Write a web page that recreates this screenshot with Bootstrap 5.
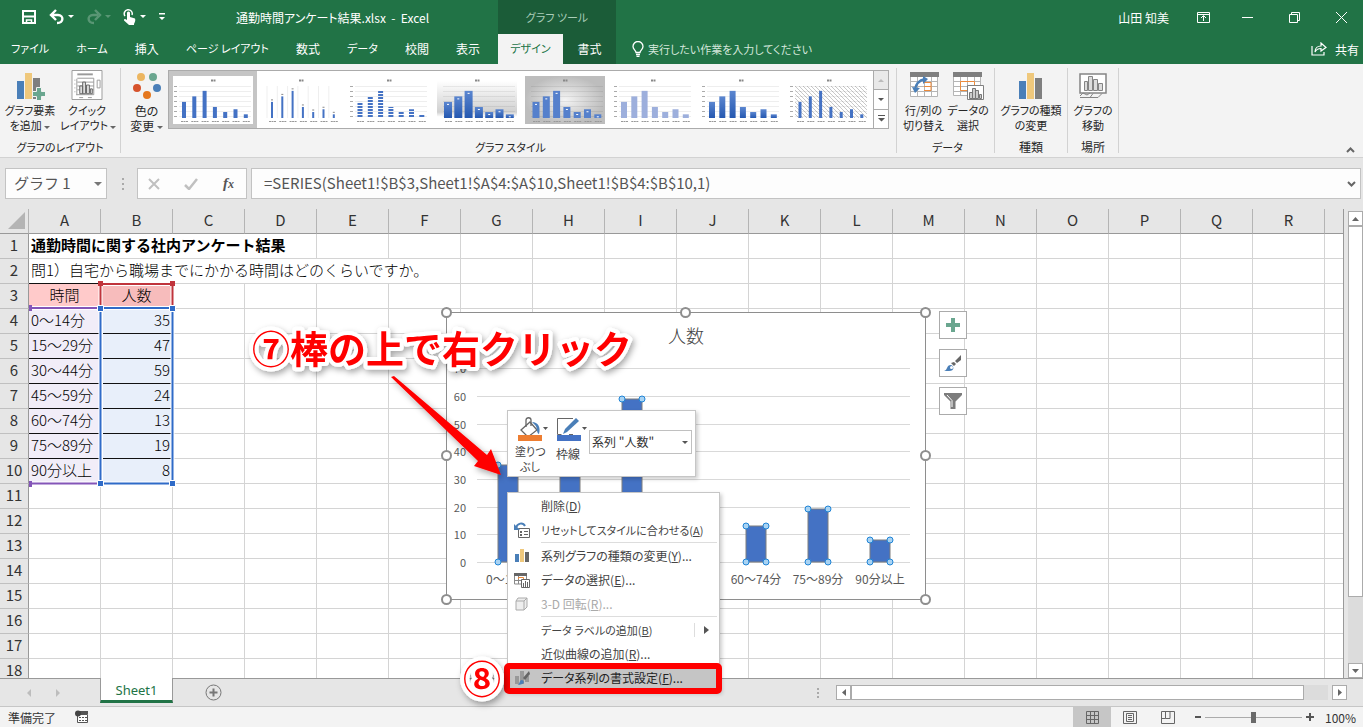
<!DOCTYPE html>
<html lang="ja">
<head>
<meta charset="utf-8">
<meta name="viewport" content="width=device-width, initial-scale=1">
<title>通勤時間アンケート結果.xlsx - Excel</title>
<link href="https://cdn.jsdelivr.net/npm/bootstrap@5.3.0/dist/css/bootstrap.min.css" rel="stylesheet">
<style>
body{font:12px/15px "Noto Sans CJK JP",sans-serif;font-feature-settings:"palt";color:#262626;background:#e6e6e6;height:100vh}
button{background:none;border:0;padding:0;color:inherit;font:inherit;font-feature-settings:inherit}
svg{display:block;flex:none}
.kana{font-size:11px}
.app-head{display:grid;grid-template-columns:498px 118px 1fr;grid-template-rows:34px 30px;background:#217346;color:#fff}
.qat{gap:12px;padding-left:21px}
.ctx{background:#1b5c38}
.ctx-cap{color:#a9cdb8}
.rtabs{padding:0 18px 2px 11px}
.rtabs a,.ctx a{color:#fff;text-decoration:none}
.ctx a{padding-bottom:2px}
.ctx a.active{background:#f3f3f3;color:#217346;width:65px}
.tell{color:#d3e6da}
.ribbon{background:#f3f3f3;border-bottom:1px solid #d2d2d2;height:94px}
.rgroup{border-right:1px solid #d2d2d2;margin:4px 0;position:relative}
.rgroup>.cap{height:16px;line-height:20px;text-align:center}
.rbtn{text-align:center;padding-top:2px;white-space:nowrap}
.rbtn svg.ic{margin:0 auto 3px}
.tri{display:inline-block;border:3px solid transparent;border-top-color:#666;border-bottom:0;vertical-align:middle}
.gallery{border:1px solid #ababab;background:#fff;height:59px;margin-top:2px}
.gallery .gitem{width:88px;height:57px;padding:4px}
.gallery .gitem.active{background:#c5c5c5}
.gscroll{width:15px;border-left:1px solid #ababab}
.gscroll button{flex:1;border-bottom:1px solid #ababab;display:flex;align-items:center;justify-content:center}
.gscroll button:last-child{border-bottom:0}
.fbar{padding:10px 2px 10px 5px;color:#555}
.fbox{background:#fdfdfd;border:1px solid #c3c3c3;height:31px}
.fbox input{border:0;background:none;outline:0;width:100%;padding:0 0 2px;color:#555;font:15px/20px "Noto Sans CJK JP",sans-serif}
.namebox{width:102px;margin-right:15px}
.fxbox{width:110px;margin:0 4px 0 12px;padding:0 10px}
.sheet{overflow:hidden;border-bottom:1px solid #999}
.grid{table-layout:fixed;border-collapse:separate;border-spacing:0;width:1px;background:#fff;font:300 15px/22px "Noto Sans CJK JP",sans-serif;font-feature-settings:normal;color:#000}
.grid b{font-weight:700}
.grid th,.grid td{height:25px;padding:0 2px 2px;border-right:1px solid #d4d4d4;border-bottom:1px solid #d4d4d4;white-space:nowrap;overflow:hidden}
.grid th{background:#e6e6e6;font-weight:400;text-align:center;border-right-color:#b4b4b4;border-bottom-color:#999;padding:0 0 2px;color:#333}
.grid tbody th{border-right-color:#999;border-bottom-color:#c0c0c0}
.grid .cat{background:#f1edf8;border-bottom-color:#111}
.grid .val{background:#e8effa;border-bottom-color:#111;text-align:right}
.gridwrap{border-right:1px solid #999;overflow:hidden}
.vscroll{width:19px;padding:2px 0 0 4px}
.sbtn{width:15px;height:15px;background:#fff;border:1px solid #ababab;display:flex;align-items:center;justify-content:center}
.thumb{background:#fff;border:1px solid #ababab}
.track{background:#dcdcdc}
.tabbar{height:27px}
.sheettab{width:73px;height:25px;background:#fff;border:solid #999;border-width:0 1px;border-bottom:3px solid #217346;color:#217346;text-decoration:none;font:13px/24px "Noto Sans",sans-serif;text-align:center;margin:-1px 0 0 36px;position:relative}
.hbar{width:511px}
.status{height:21px;background:#f3f3f3;border-top:1px solid #c6c6c6;color:#333}
.viewbtn{width:38px;height:20px;display:flex;align-items:center;justify-content:center}
.viewbtn.active{background:#c6c6c6}
.zoom{appearance:none;width:97px;height:20px;background:linear-gradient(#ababab,#ababab) center/100% 1px no-repeat}
.zoom::-webkit-slider-thumb{appearance:none;width:5px;height:11px;background:#6a6a6a}
.overlay{position:absolute;inset:0;overflow:visible;pointer-events:none;font-feature-settings:normal}
.chart-tools{position:absolute;left:939px;top:102px}
.chart-tools button{width:28px;height:28px;border:1px solid #ababab;background:#fff;display:flex;align-items:center;justify-content:center}
.popup{position:absolute;left:507px;background:#fff;border:1px solid #c6c6c6;box-shadow:2px 2px 4px #0003;color:#444;white-space:nowrap}
.minibar{top:201px;width:189px;height:67px;padding:6px 3px 0 7px}
.minibar .form-select{width:103px;height:24px;margin-top:13px;padding:0 14px 0 2px;border:1px solid #c0c0c0;border-radius:0;font:12px/20px "Noto Sans CJK JP",sans-serif;color:#333;background:#fff url("data:image/svg+xml,%3Csvg xmlns='http://www.w3.org/2000/svg' width='6' height='3'%3E%3Cpath d='M0 0h6L3 3z' fill='%23555'/%3E%3C/svg%3E") right 3px center/6px 3px no-repeat}
.ctxmenu{display:block;top:283px;width:213px;padding:1px;border-radius:0;line-height:24px}
.ctxmenu button{display:flex;align-items:center;width:100%;height:24px;text-align:left;padding-left:5px}
.ctxmenu .mi{width:16px;margin-right:11px;flex:none}
.ctxmenu hr{margin:0 1px 1px 32px;border-top:1px solid #ddd;opacity:1}
.ctxmenu .off{color:#aaa}
.ctxmenu .hot{background:#c5c5c5;color:#222}
</style>
</head>
<body class="d-flex flex-column overflow-hidden">
<header class="app-head flex-shrink-0">
  <div class="d-flex align-items-center">
    <div class="qat d-flex align-items-center">
      <button aria-label="上書き保存"><svg width="16" height="16" fill="none" stroke="#fff" stroke-width="2"><path d="M2 2h12v12H2zM3 7.500h10"/><path d="M5.500 14v-3h5v3" stroke-width="1.500"/></svg></button>
      <button class="d-flex align-items-center" aria-label="元に戻す"><svg width="25" height="16"><path d="M3 6h6c6 0 6 8-1 8M7 1L2 6l5 5" fill="none" stroke="#fff" stroke-width="2.400"/><path d="M19 6h6l-3 3z" fill="#fff"/></svg></button>
      <button class="d-flex align-items-center" aria-label="やり直し"><svg width="25" height="16" opacity=".25"><path d="M12 6H7c-6 0-6 8 1 8M9 1l5 5-5 5" fill="none" stroke="#fff" stroke-width="2.400"/><path d="M19 6h6l-3 3z" fill="#fff"/></svg></button>
      <button aria-label="タッチ/マウス モード"><svg width="24" height="18" fill="#fff"><path d="M2 8a4 4 0 1 1 7-1" fill="none" stroke="#fff" stroke-width="1.500"/><path d="M4 4.500q1.500-2 3 0V9l5 1.500c1 3-1 4-1 6.500H6L1 12.500c0-2 1-2 3-.5zM17 7h6l-3 3z"/></svg></button>
      <button aria-label="クイック アクセスのカスタマイズ"><svg width="8" height="8" fill="#fff"><path d="M0 0h6v1.500H0zM0 4h6L3 7z"/></svg></button>
    </div>
    <div class="flex-fill text-center">通勤時間アンケート結果.xlsx&nbsp; -&nbsp; Excel</div>
  </div>
  <div class="ctx ctx-cap kana d-flex align-items-center justify-content-center">グラフ ツール</div>
  <div class="d-flex align-items-center justify-content-end">
    <span>山田 知美</span>
    <button class="ms-4 me-4" aria-label="リボンの表示オプション"><svg class="ms-1 me-2" width="13" height="11" fill="none" stroke="#fff"><path d="M.5.5h12v10H.5zM1 2.500h11M6.500 9V4M4 6l2.500-2.500L9 6"/></svg></button>
    <button class="me-4" aria-label="最小化"><svg class="me-2" width="11" height="11" stroke="#fff"><path d="M0 5.500h11"/></svg></button>
    <button class="ms-1 me-4" aria-label="元のサイズに戻す"><svg class="me-2" width="11" height="11" fill="none" stroke="#fff"><path d="M.5 2.500h8v8h-8zM2.500 2.500v-2h8v8h-2"/></svg></button>
    <button class="ms-1" aria-label="閉じる"><svg class="me-3" width="11" height="11" stroke="#fff"><path d="M0 0l11 11M11 0L0 11"/></svg></button>
  </div>
  <nav class="rtabs d-flex align-items-center justify-content-between" aria-label="リボン">
    <a class="kana" href="#">ファイル</a><a class="kana" href="#">ホーム</a><a href="#">挿入</a><a class="kana" href="#">ページ レイアウト</a><a href="#">数式</a><a class="kana" href="#">データ</a><a href="#">校閲</a><a href="#">表示</a>
  </nav>
  <nav class="ctx d-flex text-center" aria-label="グラフ ツール">
    <a class="active kana d-flex align-items-center justify-content-center" href="#">デザイン</a><a class="flex-fill d-flex align-items-center justify-content-center" href="#">書式</a>
  </nav>
  <div class="d-flex align-items-center justify-content-between ps-3 pe-1">
    <button class="tell kana d-flex align-items-center gap-1"><svg width="12" height="16" fill="none" stroke="#fff" stroke-width="1.300"><path d="M4 11.500c0-2-3-3-3-6a5 5 0 0 1 10 0c0 3-3 4-3 6zM4 13.500h4M4.500 15.500h3"/></svg>実行したい作業を入力してください</button>
    <button class="d-flex align-items-center gap-2"><svg width="16" height="14" fill="none" stroke="#fff" stroke-width="1.200"><path d="M1 4v9h12V10M4 10c0-4 3-6 6-6V1l5 4.500L10 9V6.500C7 6.500 5 8 4 10z"/></svg>共有</button>
  </div>
</header>

<section class="ribbon d-flex flex-shrink-0" aria-label="デザイン">
  <div class="rgroup d-flex flex-column justify-content-between" style="width:121px">
    <div class="d-flex">
      <button class="rbtn kana" style="width:60px"><svg class="ic" width="30" height="30"><path fill="#4a7fb8" d="M2 11h7v18H2z"/><path fill="#efc87c" d="M10 3h7v26h-7z"/><path fill="#7f7f7f" d="M18 8h7v21h-7z"/><path fill="#6aa68f" stroke="#f3f3f3" d="M21.500 18.500h5v4h4v5h-4v4h-5v-4h-4v-5h4z" transform="translate(0 -1)"/></svg>グラフ要素<br>を追加 <i class="tri"></i></button>
      <button class="rbtn kana" style="width:54px"><svg class="ic" width="32" height="30" viewBox="0 0 32 31" fill="none" stroke="#9a9a9a"><path fill="#fff" d="M.5.500h31v30H.5z"/><path d="M6 4.500h16" stroke-width="2"/><path d="M5.500 9v17M5 25.500h18M3 10.500h1M3 14.500h1M3 18.500h1M3 22.500h1M6 8.500h17v17M6 12.500h17M6 16.500h17M6 20.500h17M8 28.500h4M17 28.500h4M26.500 10.500h3v8h-3z"/><path fill="#ddd" stroke="#666" d="M8.500 16.500h3v8h-3zM11.500 12.500h3v12h-3zM15.500 15.500h3v9h-3zM19.500 19.500h2v5h-2z"/></svg>クイック<br>レイアウト <i class="tri"></i></button>
    </div>
    <div class="cap kana">グラフのレイアウト</div>
  </div>
  <div class="rgroup d-flex flex-column justify-content-between ps-1" style="width:776px">
    <div class="d-flex">
      <button class="rbtn" style="width:43px"><svg class="ic" width="30" height="30"><circle cx="9" cy="7" r="4" fill="#ecb661"/><circle cx="21" cy="7" r="4" fill="#6aa68f"/><circle cx="5" cy="18" r="4" fill="#d6532c"/><circle cx="25" cy="18" r="4" fill="#4a7fb8"/><circle cx="15" cy="25" r="4" fill="#e5771d"/></svg>色の<br>変更 <i class="tri"></i></button>
      <div class="gallery d-flex" id="gallery">
        <div class="gscroll d-flex flex-column order-last"><button style="background:#e9e9e9" aria-label="前へ"><svg width="6" height="3"><path d="M0 3h6L3 0z" fill="#bbb"/></svg></button><button aria-label="次へ"><svg width="6" height="3"><path d="M0 0h6L3 3z" fill="#555"/></svg></button><button aria-label="その他"><svg width="7" height="7"><path d="M0 0h7v1H0zM0 3h7L3.500 6.500z" fill="#555"/></svg></button></div>
      </div>
    </div>
    <div class="cap kana">グラフ スタイル</div>
  </div>
  <div class="rgroup d-flex flex-column justify-content-between ps-1" style="width:98px">
    <div class="d-flex">
      <button class="rbtn kana" style="width:45px"><svg class="ic" width="30" height="30"><path fill="#fff" stroke="#b5b5b5" d="M1.500 6.500h27v20h-27zM2 11.500h26M2 16.500h26M2 21.500h26M8.500 7v19M15.500 7v19M22.500 7v19"/><path fill="#7f7f7f" d="M1 2h29v5H1z"/><path d="M15 12.500h7v8h-7M15 16.500h7" fill="none" stroke="#ec8b3c"/><path d="M6 20q1-9 10-11" fill="none" stroke="#4a7fb8" stroke-width="2.500"/><path fill="#4a7fb8" d="M3 17l3 6 5-5zM14 6l5 3-5 5z"/></svg>行/列の<br>切り替え</button>
      <button class="rbtn kana" style="width:44px"><svg class="ic" width="32" height="30"><path fill="#fff" stroke="#b5b5b5" d="M1.500 6.500h27v19h-27zM2 11.500h26M2 16.500h26M2 21.500h26M8.500 7v19M15.500 7v19M22.500 7v19"/><path fill="#7f7f7f" d="M1 2h29v5H1z"/><path d="M8.500 11.500h14v9h-14z" fill="none" stroke="#ec8b3c"/><path fill="#fff" stroke="#7f7f7f" d="M15.500 15.500h16v14h-16z"/><path fill="#ccc" stroke="#777" d="M17.500 22.500h3v6h-3zM20.500 18.500h3v10h-3zM23.500 20.500h3v8h-3zM27.500 24.500h2v4h-2z"/></svg>データの<br>選択</button>
    </div>
    <div class="cap kana">データ</div>
  </div>
  <div class="rgroup d-flex flex-column justify-content-between" style="width:73px">
    <button class="rbtn kana"><svg class="ic" width="24" height="30"><path fill="#4a7fb8" d="M0 11h7v18H0z"/><path fill="#efc87c" d="M8 3h7v26H8z"/><path fill="#7f7f7f" d="M16 8h7v21h-7z"/></svg>グラフの種類<br>の変更</button>
    <div class="cap">種類</div>
  </div>
  <div class="rgroup d-flex flex-column justify-content-between" style="width:51px">
    <button class="rbtn kana"><svg class="ic" width="28" height="30" fill="none" stroke="#858585" stroke-width="1.500"><path fill="#fff" d="M1 4h26v19H1z"/><path stroke-width="1" d="M1 26l3-3 4 2 3-2M1 27.500h10l3-4M11 27.500h8l4-4"/><path stroke-width="1" fill="#ddd" d="M5.500 11.500h3v9h-3zM9.500 6.500h4v14h-4zM14.500 9.500h4v11h-4zM19.500 13.500h4v7h-4z"/></svg>グラフの<br>移動</button>
    <div class="cap">場所</div>
  </div>
  <button class="ms-auto align-self-end me-2 mb-1" aria-label="リボンを折りたたむ"><svg width="9" height="6"><path d="M1 5l3.500-3.500L8 5" fill="none" stroke="#666" stroke-width="2"/></svg></button>
</section>

<section class="fbar d-flex align-items-center flex-shrink-0" aria-label="数式バー">
  <label class="fbox namebox d-flex align-items-center ps-2 pe-1"><input aria-label="名前ボックス" value="グラフ 1"><svg width="8" height="4"><path d="M0 0h8L4 4z" fill="#777"/></svg></label>
  <svg width="3" height="14" fill="#aaa"><path d="M0 1h2v2H0zM0 6h2v2H0zM0 11h2v2H0z"/></svg>
  <div class="fbox fxbox d-flex align-items-center justify-content-between">
    <button aria-label="キャンセル"><svg width="12" height="12"><path d="M1 1l10 10M11 1L1 11" stroke="#c0c0c0" stroke-width="2"/></svg></button>
    <button aria-label="入力"><svg width="14" height="12"><path d="M1 7l4 4L13 1" fill="none" stroke="#c0c0c0" stroke-width="2.500"/></svg></button>
    <button aria-label="関数の挿入"><svg width="14" height="16" font-family="Liberation Serif, serif" font-style="italic" font-weight="700" fill="#555"><text x="1" y="12" font-size="15">f<tspan font-size="12">x</tspan></text></svg></button>
  </div>
  <div class="fbox flex-fill d-flex align-items-center ps-2 pe-1"><input class="ms-1" aria-label="数式" value="=SERIES(Sheet1!$B$3,Sheet1!$A$4:$A$10,Sheet1!$B$4:$B$10,1)"><svg width="9" height="6"><path d="M1 1l3.500 3.500L8 1" fill="none" stroke="#666" stroke-width="2"/></svg></div>
</section>

<main class="flex-fill d-flex flex-column position-relative" style="min-height:0">
  <div class="sheet flex-fill d-flex" style="min-height:0">
    <div class="gridwrap flex-fill" id="view">
      <table class="grid">
        <colgroup id="cols"><col style="width:29px"></colgroup>
        <thead><tr id="heads"><th><svg width="28" height="22"><path d="M25 3v17H8z" fill="#b4b4b4"/></svg></th></tr></thead>
        <tbody id="rows">
          <tr><th>1</th><td colspan="4"><b>通勤時間に関する社内アンケート結果</b></td></tr>
          <tr><th>2</th><td colspan="6">問1）自宅から職場までにかかる時間はどのくらいですか。</td></tr>
          <tr><th>3</th><td class="text-center" style="background:#ffcaca">時間</td><td class="text-center" style="background:#f7bcbc">人数</td></tr>
          <tr><th>4</th><td class="cat">0～14分</td><td class="val">35</td></tr>
          <tr><th>5</th><td class="cat">15～29分</td><td class="val">47</td></tr>
          <tr><th>6</th><td class="cat">30～44分</td><td class="val">59</td></tr>
          <tr><th>7</th><td class="cat">45～59分</td><td class="val">24</td></tr>
          <tr><th>8</th><td class="cat">60～74分</td><td class="val">13</td></tr>
          <tr><th>9</th><td class="cat">75～89分</td><td class="val">19</td></tr>
          <tr><th>10</th><td class="cat">90分以上</td><td class="val">8</td></tr>
        </tbody>
      </table>
    </div>
    <div class="vscroll d-flex flex-column">
      <button class="sbtn" aria-label="上へ"><svg width="7" height="4"><path d="M0 4h7L3.500 0z" fill="#666"/></svg></button>
      <div class="track flex-fill"><div class="thumb" style="height:85%"></div></div>
      <button class="sbtn" aria-label="下へ"><svg width="7" height="4"><path d="M0 0h7L3.500 4z" fill="#666"/></svg></button>
    </div>
  </div>
  <div class="tabbar d-flex align-items-center flex-shrink-0">
    <svg class="ms-4" width="40" height="8" fill="#bdbdbd"><path d="M7 0v8L3 4zM32 0v8l4-4z"/></svg>
    <a class="sheettab align-self-start" href="#">Sheet1</a>
    <button class="ms-4 ps-2" aria-label="新しいシート"><svg width="17" height="17" fill="none" stroke="#777"><circle cx="8.500" cy="8.500" r="7.500"/><path d="M4.500 8.500h8M8.500 4.500v8" stroke-width="2"/></svg></button>
    <svg class="ms-auto me-3" width="3" height="12" fill="#aaa"><path d="M0 1h2v2H0zM0 5h2v2H0zM0 9h2v2H0z"/></svg>
    <div class="hbar d-flex me-3">
      <button class="sbtn" aria-label="左へ"><svg width="4" height="7"><path d="M4 0v7L0 3.500z" fill="#666"/></svg></button>
      <div class="track flex-fill me-1"><div class="thumb h-100" style="width:95%"></div></div>
      <button class="sbtn" aria-label="右へ"><svg width="4" height="7"><path d="M0 0v7l4-3.500z" fill="#666"/></svg></button>
    </div>
  </div>

  <svg class="overlay" width="100%" height="100%" font-family="Noto Sans CJK JP, sans-serif" aria-label="人数グラフ">
    <g transform="translate(0 -209)">
      <path d="M29 283.500h71" stroke="#111"/>
      <g fill="none" stroke="#fff" stroke-width="4"><path d="M100.500 284h72v24h-72z"/><path d="M29 308h72v175.500H29"/><path d="M100.500 308h72v175.500h-72z"/></g>
      <path d="M100.500 284h72v24h-72z" fill="none" stroke="#c0343c" stroke-width="2"/>
      <path d="M29 308h71M29 483.500h71" stroke="#8455b8" stroke-width="2"/>
      <path d="M100.500 308h72v175.500h-72z" fill="none" stroke="#2f6bc8" stroke-width="2"/>
      <path fill="#c0343c" d="M98 281h5v5h-5zM170 281h5v5h-5z"/>
      <path fill="#8455b8" d="M29 305h3v6h-3zM29 481h3v6h-3z"/>
      <path fill="#2f6bc8" stroke="#fff" d="M97.500 305.500h6v6h-6zM169.500 305.500h6v6h-6zM97.500 480.500h6v6h-6zM169.500 480.500h6v6h-6z"/>
      <path d="M446.500 312.500h479v287h-479z" fill="#fff" stroke="#8e8e8e"/>
      <text x="686" y="343" font-size="18" font-weight="300" text-anchor="middle" fill="#444">人数</text>
      <g id="plot"></g>
      <g id="grips" fill="#fff" stroke="#8e8e8e" stroke-width="2"></g>
    </g>
  </svg>

  <div class="chart-tools d-flex flex-column" style="gap:10px">
    <button aria-label="グラフ要素"><svg width="14" height="14"><path d="M7 0v14M0 7h14" stroke="#6aa68f" stroke-width="4"/></svg></button>
    <button aria-label="グラフ スタイル"><svg width="18" height="18"><path d="M17 1v5l-4 3-2-2zM10 8l2 2-2 2-3-3z" fill="#666"/><path d="M0 17c4-1 2-6 7-6 3 1 4 6-2 6z" fill="#4a7fb8"/><circle cx="7.500" cy="13.500" r="1.500" fill="#fff"/></svg></button>
    <button aria-label="グラフ フィルター"><svg width="18" height="17"><path d="M0 0h18v2l-6.500 6.500V16h-5V8.500L0 2z" fill="#7c7c7c"/><path d="M3 2l5 5.500V14" fill="none" stroke="#fff"/></svg></button>
  </div>

  <div class="popup minibar d-flex">
    <button class="text-center align-self-start me-1" style="width:34px"><svg width="34" height="25"><path d="M6 13l9-8 7 8-9 7z" fill="#fff" stroke="#666" stroke-width="1.300"/><path d="M11 10V3c0-3 5-3 5 0v6" fill="none" stroke="#666" stroke-width="1.300"/><path d="M17 5c6 0 9 5 7 12-3-1-1-6-4-9z" fill="#4a7fb8"/><path d="M3 18h24v6H3z" fill="#ed7d31"/><path d="M28 10h5l-2.500 3z" fill="#555"/></svg><span class="kana d-block pt-1 pe-1 lh-1">塗りつ</span><span class="kana d-block pt-1 pe-1 lh-1">ぶし</span></button>
    <button class="text-center align-self-start" style="width:34px"><svg width="34" height="25"><path d="M20 1.500H4.500v16h4M16 17.500h4" fill="none" stroke="#666"/><path d="M10 17l2-5L23 1l3 3-12 11z" fill="#4a7fb8"/><path d="M4 18h24v6H4z" fill="#4472c4"/><path d="M29 10h5l-2.500 3z" fill="#555"/></svg><span class="d-block pe-1 mt-1">枠線</span></button>
    <select class="form-select ms-auto" aria-label="グラフ要素の選択"><option>系列 "人数"</option></select>
  </div>

  <div class="popup ctxmenu" role="menu">
    <button role="menuitem"><span class="mi"></span><span>削除(<u>D</u>)</span></button>
    <button role="menuitem"><span class="mi"><svg width="16" height="16"><path d="M4.500 6.500h11v9h-11z" fill="#fff" stroke="#666"/><path d="M6 9h2v2H6zM6 12h2v2H6zM10 9h4v1h-4zM10 12h4v1h-4z" fill="#666"/><path d="M2 6c1-5 7-6 9-2" fill="none" stroke="#4a7fb8" stroke-width="2"/><path d="M0 2v6h6z" fill="#4a7fb8"/></svg></span><span class="kana">リセットしてスタイルに合わせる(<u>A</u>)</span></button>
    <hr>
    <button role="menuitem"><span class="mi"><svg width="16" height="16"><path fill="#4a7fb8" d="M1 6h4v8H1z"/><path fill="#efc87c" d="M6 1h4v13H6z"/><path fill="#666" d="M11 4h4v10h-4z"/></svg></span><span>系列グラフの種類の変更(<u>Y</u>)...</span></button>
    <button role="menuitem"><span class="mi"><svg width="16" height="16"><path d="M0 1h13v3H0z" fill="#666"/><path d="M.5 4v8h7M.5 8.500h8M4.500 4v8M12.500 4v3" fill="none" stroke="#888"/><path d="M4.500 7V5.500h5V7" stroke="#ec8b3c" fill="none"/><path d="M7.500 7.500h8v8h-8z" fill="#fff" stroke="#666"/><path d="M9 11h1v4H9zM11 9h1v6h-1zM13 10h1v5h-1z" fill="#666"/></svg></span><span>データの選択(<u>E</u>)...</span></button>
    <button role="menuitem" class="off"><span class="mi"><svg width="16" height="16"><path d="M2 5l2-3h9v9l-3 3H2z" fill="#eee" stroke="#aaa"/><path d="M2 5h8v9M10 5l3-3" fill="none" stroke="#aaa"/></svg></span><span>3-D 回転(<u>R</u>)...</span></button>
    <hr>
    <button role="menuitem"><span class="mi"></span><span class="kana flex-fill">データ ラベルの追加(<u>B</u>)</span><svg width="24" height="14"><path d="M.5 0v14" stroke="#ddd"/><path d="M10 3v8l5-4z" fill="#555"/></svg></button>
    <button role="menuitem"><span class="mi"></span><span>近似曲線の追加(<u>R</u>)...</span></button>
    <button role="menuitem" class="hot"><span class="mi"><svg width="16" height="16"><path fill="#999" d="M1 6h4v8H1zM6 1h4v13H6zM11 6h4v6h-4z"/><path d="M15 1l1 3-5 6-2-2z" fill="#666"/><path d="M3 15c3 0 2-5 5-5 3 1 3 5-5 5z" fill="#4a7fb8"/></svg></span><span>データ系列の書式設定(<u>F</u>)...</span></button>
  </div>

  <svg class="overlay" width="100%" height="100%" font-family="Noto Sans CJK JP, sans-serif">
    <defs><filter id="soft" x="-10%" y="-20%" width="120%" height="150%"><feDropShadow dx="2" dy="3" stdDeviation="3" flood-opacity=".35"/></filter></defs>
    <g transform="translate(0 -209)">
      <rect x="507" y="666" width="212" height="25" rx="2" fill="none" stroke="#f00" stroke-width="6"/>
      <g filter="url(#soft)">
        <path d="M391 377l3-1 93 79 4-6 10 26-27-9 4-5z" fill="#f00"/>
        <g font-size="38" font-weight="700" fill="#f00" stroke="#fff" stroke-width="8" stroke-linejoin="round" paint-order="stroke">
          <text x="252" y="363">⑦棒の上で右クリック</text>
          <text x="463" y="693">⑧</text>
        </g>
      </g>
    </g>
  </svg>
</main>

<footer class="status d-flex align-items-center flex-shrink-0">
  <span class="ps-2">準備完了</span>
  <svg class="ms-3" width="18" height="14"><path d="M5.500 4.500h10v8h-10z" fill="#fff" stroke="#555"/><path d="M7 1h9v3H7z" fill="#555"/><circle cx="6" cy="3.500" r="3" fill="#444"/><path d="M7 7.500h8M7 10.500h8" stroke="#555" stroke-dasharray="2 1"/></svg>
  <button class="viewbtn active ms-auto" aria-label="標準"><svg width="13" height="13" fill="none" stroke="#666"><path d="M.5.500h12v12H.5zM4.500 0v13M8.500 0v13M0 4.500h13M0 8.500h13"/></svg></button>
  <button class="viewbtn" aria-label="ページ レイアウト"><svg width="14" height="13" fill="none" stroke="#666"><path d="M.5.500h13v12H.5zM3.500 2.500h7v8h-7zM5 4.500h4M5 6.500h4M5 8.500h4"/></svg></button>
  <button class="viewbtn me-2" aria-label="改ページ プレビュー"><svg width="14" height="13" fill="none" stroke="#666"><path d="M.5.500h13v12H.5zM4.500 0v7.500H9V0M4.500 7.500H0"/></svg></button>
  <button aria-label="縮小"><svg width="6" height="10"><path d="M0 5h6" stroke="#555" stroke-width="2"/></svg></button>
  <input class="zoom mx-1" type="range" min="0" max="100" value="50" aria-label="ズーム">
  <button aria-label="拡大"><svg width="8" height="8"><path d="M0 4h8M4 0v8" stroke="#555" stroke-width="2"/></svg></button>
  <span class="ms-2 me-1 text-center" style="width:37px">100%</span>
</footer>

<script src="https://cdn.jsdelivr.net/npm/bootstrap@5.3.0/dist/js/bootstrap.bundle.min.js"></script>
<script>
const data = [['0～14分',35],['15～29分',47],['30～44分',59],['45～59分',24],['60～74分',13],['75～89分',19],['90分以上',8]];

// As many columns and rows as the window shows; a column too narrow for its letter stays unlabelled
const room = view.clientWidth - 29, colCount = Math.ceil(room / 72), rowCount = Math.ceil((view.clientHeight - 25) / 25);
for (let i = 0; i < colCount; i++) {
  const label = i < 26 && i * 72 + 45 < room ? String.fromCharCode(65 + i) : '';
  cols.insertAdjacentHTML('beforeend', '<col style="width:72px">');
  heads.insertAdjacentHTML('beforeend', `<th>${label}</th>`);
}
for (let r = 11; r <= rowCount; r++) rows.insertAdjacentHTML('beforeend', `<tr><th>${r}</th></tr>`);
for (const tr of rows.rows) {
  let used = 0;
  for (const c of tr.cells) used += c.colSpan;
  tr.insertAdjacentHTML('beforeend', '<td></td>'.repeat(Math.max(0, colCount + 1 - used)));
}

// Chart: value axis, bars with selection dots, category labels
const base = 562, unit = 2.77;
let s = '';
for (let v = 0; v <= 70; v += 10) {
  const y = Math.round(base - v * unit) + .5;
  s += `<path d="M477 ${y}h433" stroke="#d9d9d9"/><text x="466" y="${y + 4}" font-size="11" text-anchor="end" fill="#595959">${v}</text>`;
}
data.forEach(([name, v], i) => {
  const x = 508 + i * 62, top = Math.round(base - v * unit);
  s += `<rect x="${x - 10}" y="${top}" width="20" height="${base - top}" fill="#4472c4" stroke="#7f7f7f"/>`;
  for (const [cx, cy] of [[x - 10, top], [x + 10, top], [x - 10, base], [x + 10, base]])
    s += `<circle cx="${cx}" cy="${cy}" r="3" fill="#a9d3f3" stroke="#1f84d6"/>`;
  s += `<text x="${x}" y="584" font-size="12" text-anchor="middle" fill="#595959">${name}</text>`;
});
plot.innerHTML = s;
grips.innerHTML = [[446,312],[685,312],[925,312],[446,455],[925,455],[446,599],[685,599],[925,599]]
  .map(([x, y]) => `<circle cx="${x + .5}" cy="${y + .5}" r="4.500"/>`).join('');

// Chart style thumbnails
const styles = [
  {w:4, fill:'#4472c4'}, {w:2, fill:'#4472c4', vert:1}, {w:5, fill:'url(#stripe)'},
  {w:8, fill:'url(#deep)', bg:'url(#fade)'}, {w:7, fill:'#5580cc', bg:'url(#metal)'},
  {w:6, fill:'#9dafdc'}, {w:6, fill:'url(#deep)'}, {w:3, fill:'#4472c4', hatch:1}
];
const defs = `<defs><pattern id="stripe" width="4" height="3" patternUnits="userSpaceOnUse"><path d="M0 0h4v2H0z" fill="#4472c4"/></pattern>
<pattern id="hatch" width="4" height="4" patternUnits="userSpaceOnUse"><path d="M0 0l4 4" stroke="#bbb" stroke-width=".8"/></pattern>
<linearGradient id="deep" x2="0" y2="1"><stop stop-color="#5b86d0"/><stop offset="1" stop-color="#2558b0"/></linearGradient>
<linearGradient id="fade" x2="0" y2="1"><stop offset=".1" stop-color="#fff"/><stop offset=".75" stop-color="#d0d0d0"/><stop offset=".85" stop-color="#fff"/></linearGradient>
<radialGradient id="metal"><stop stop-color="#f4f4f4"/><stop offset="1" stop-color="#bdbdbd"/></radialGradient></defs>`;
gallery.insertAdjacentHTML('beforeend', styles.map((st, n) => {
  let g = `<rect width="80" height="48" fill="${st.bg || '#fff'}"/>`;
  if (st.hatch) g += '<rect x="6" y="10" width="72" height="32" fill="url(#hatch)"/>';
  for (let y = 10; y < 43; y += 5) g += st.vert ? '' : `<path d="M6 ${y}.5h72" stroke="#0001"/>`;
  data.forEach(([, v], i) => {
    const x = 11 + i * 10.3, h = v * .46;
    if (st.vert) g += `<path d="M${x - 5} 10v32" stroke="#0001"/>`;
    g += `<rect x="${x - st.w / 2}" y="${42 - h}" width="${st.w}" height="${h}" fill="${st.fill}"/><path d="M${x - 3} 45.500h7" stroke="#999" stroke-dasharray="2 .5"/>`;
    if (!st.bg && !st.vert) g += `<path d="M1 ${10 + i * 5}.5h3" stroke="#aaa"/>`;
    if (st.bg || st.vert) g += `<path d="M${x - 1} ${42 - h + (st.bg ? 2.5 : -2)}h2" stroke="${st.bg ? '#fff' : '#888'}"/>`;
  });
  return `<button class="gitem${n ? '' : ' active'}" aria-label="スタイル ${n + 1}"><svg width="80" height="48">${n ? '' : defs}${g}<path d="M38 4.500h5" stroke="#888" stroke-width="2" stroke-dasharray="2 .5"/></svg></button>`;
}).join(''));
</script>
</body>
</html>
